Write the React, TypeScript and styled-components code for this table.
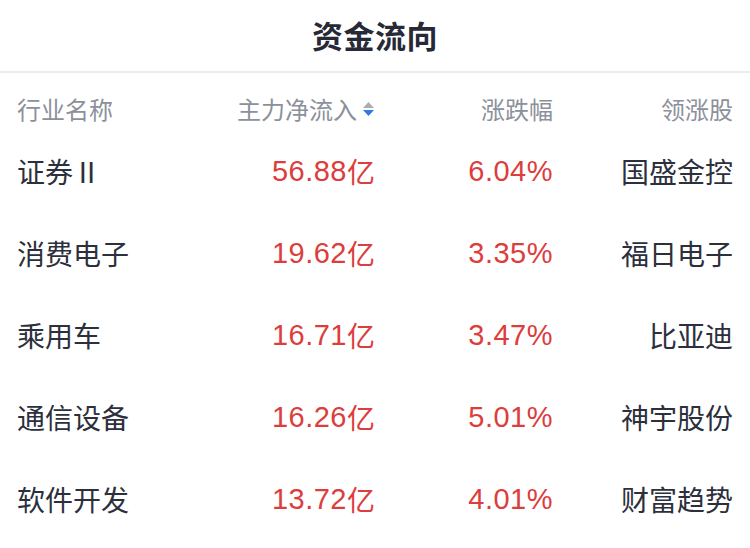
import styled, { createGlobalStyle } from 'styled-components'

const GlobalStyle = createGlobalStyle`
  html, body {
    margin: 0;
    padding: 0;
    background: #fff;
  }
  body {
    font-family: "Noto Sans", "Noto Sans CJK SC", sans-serif;
  }
`

interface IRow {
  name: string
  flow: string
  change: string
  leader: string
}

const rows: IRow[] = [
  { name: '证券Ⅱ', flow: '56.88', change: '6.04%', leader: '国盛金控' },
  { name: '消费电子', flow: '19.62', change: '3.35%', leader: '福日电子' },
  { name: '乘用车', flow: '16.71', change: '3.47%', leader: '比亚迪' },
  { name: '通信设备', flow: '16.26', change: '5.01%', leader: '神宇股份' },
  { name: '软件开发', flow: '13.72', change: '4.01%', leader: '财富趋势' },
]

const Page = styled.div`
  width: 750px;
  height: 548px;
  overflow: hidden;
  background: #fff;
`

const Title = styled.div`
  height: 73px;
  display: flex;
  align-items: center;
  justify-content: center;
  border-bottom: 2px solid #ececec;
  box-sizing: border-box;
  font-size: 31px;
  font-weight: 700;
  color: #272a36;
  letter-spacing: 0.5px;
  font-family: "Noto Sans CJK SC", sans-serif;
  padding-bottom: 2px;
`

const Grid = styled.div`
  display: grid;
  grid-template-columns: 180px 178px 178px 180px;
  padding: 0 17px;
`

const HeadRow = styled(Grid)`
  height: 57px;
  padding-top: 14px;
  box-sizing: border-box;
  font-size: 24px;
  line-height: 26px;
  color: #8c909b;
  font-family: "Noto Sans CJK SC", sans-serif;
`

const Row = styled(Grid)`
  height: 82px;
  align-items: center;
  font-size: 28px;
`

const Cell = styled.div<{ $align?: 'left' | 'right'; $red?: boolean }>`
  display: flex;
  align-items: center;
  justify-content: ${(p) => (p.$align === 'right' ? 'flex-end' : 'flex-start')};
  color: ${(p) => (p.$red ? '#dc3d3d' : '#2c2f3c')};
  white-space: nowrap;
`

const HeadCell = styled.div<{ $align?: 'left' | 'right' }>`
  display: flex;
  align-items: center;
  justify-content: ${(p) => (p.$align === 'right' ? 'flex-end' : 'flex-start')};
`

const Name = styled.span`
  font-family: "Noto Sans CJK SC", sans-serif;
`

const Num = styled.span`
  font-family: "Liberation Sans", "Noto Sans CJK SC", sans-serif;
  font-size: 29px;
  letter-spacing: 0.5px;
`

const Unit = styled.span`
  font-family: "Noto Sans CJK SC", sans-serif;
  font-size: 28px;
`

const SortIcon = () => (
  <svg width="13" height="20" viewBox="0 0 13 20" style={{ marginLeft: 5 }}>
    <path d="M6.5 3 L12 9 L1 9 Z" fill="#a9adb6" />
    <path d="M6.5 17 L12 11 L1 11 Z" fill="#2f7ae5" />
  </svg>
)

export default function App() {
  return (
    <Page>
      <GlobalStyle />
      <Title>资金流向</Title>
      <HeadRow>
        <HeadCell>行业名称</HeadCell>
        <HeadCell $align="right">
          主力净流入
          <SortIcon />
        </HeadCell>
        <HeadCell $align="right">涨跌幅</HeadCell>
        <HeadCell $align="right">领涨股</HeadCell>
      </HeadRow>
      {rows.map((r) => (
        <Row key={r.name}>
          <Cell>
            <Name>{r.name}</Name>
          </Cell>
          <Cell $align="right" $red>
            <Num>{r.flow}</Num>
            <Unit>亿</Unit>
          </Cell>
          <Cell $align="right" $red>
            <Num>{r.change}</Num>
          </Cell>
          <Cell $align="right">
            <Name>{r.leader}</Name>
          </Cell>
        </Row>
      ))}
    </Page>
  )
}
